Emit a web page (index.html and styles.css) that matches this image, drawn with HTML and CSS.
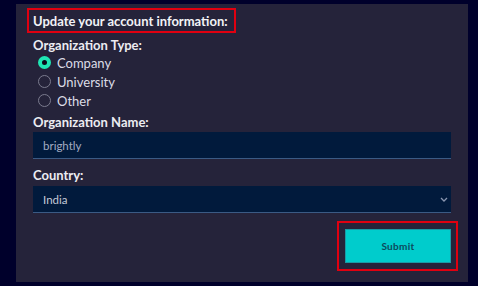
FILE: index.html
```html
<!DOCTYPE html>
<html>
<head>
<meta charset="utf-8">
<link rel="stylesheet" href="styles.css">
</head>
<body>
<div class="panel">
  <div class="heading-box"><h1 class="heading">Update your account information:</h1></div>
  <div class="label">Organization Type:</div>
  <div class="radios">
    <label class="radio"><span class="dot checked"></span>Company</label>
    <label class="radio"><span class="dot"></span>University</label>
    <label class="radio"><span class="dot"></span>Other</label>
  </div>
  <div class="label name-label">Organization Name:</div>
  <div class="field">brightly</div>
  <div class="label country-label">Country:</div>
  <div class="field select">India
    <svg class="chev" width="8" height="5" viewBox="0 0 8 5"><path d="M1 1l3 3 3-3" fill="none" stroke="#8a96b0" stroke-width="1.3"/></svg>
  </div>
  <div class="actions">
    <div class="btn-box"><button class="submit">Submit</button></div>
  </div>
</div>
</body>
</html>
```
FILE: styles.css
```css
html, body { margin: 0; padding: 0; }
body {
  background: #00002b;
  width: 478px;
  height: 286px;
  overflow: hidden;
  font-family: Lato, "Noto Sans", sans-serif;
  color: #e6e6ee;
}
.panel {
  margin: 4px 0 0 16px;
  width: 452px;
  height: 278px;
  box-sizing: border-box;
  background: #25233a;
  padding: 4px 17px 0 11px;
  display: flex;
  flex-direction: column;
}
.heading-box {
  align-self: flex-start;
  border: 2px solid #e00010;
  padding: 0 6px 0 4px;
  height: 25px;
  box-sizing: border-box;
  display: flex;
  align-items: center;
}
.heading {
  margin: 0;
  font-size: 13px;
  font-weight: 700;
  color: #f2f2f6;
  letter-spacing: 0;
}
.label {
  font-size: 13px;
  font-weight: 700;
  padding-left: 6px;
  margin-top: 4px;
  height: 17px;
  line-height: 17px;
  color: #ececf2;
}
.radios {
  display: flex;
  flex-direction: column;
  padding-left: 6px;
  margin-top: -1px;
}
.radio {
  display: flex;
  align-items: center;
  gap: 6px;
  height: 19px;
  font-size: 13px;
  color: #dcdce6;
  padding-left: 5px;
}
.dot {
  width: 13px;
  height: 13px;
  border-radius: 50%;
  border: 1.3px solid #7b7b8e;
  box-sizing: border-box;
}
.dot.checked {
  border: 4px solid #1fe6b4;
  background: #0a0a1a;
}
.name-label { margin-top: 4px; }
.field {
  margin-left: 6px;
  margin-top: 1px;
  height: 27px;
  box-sizing: border-box;
  background: #011a3c;
  border-bottom: 1.5px solid #3b5a84;
  font-size: 11.5px;
  color: #a4acc2;
  padding-left: 10px;
  display: flex;
  align-items: center;
}
.country-label { margin-top: 8px; }
.select {
  position: relative;
  color: #c6cad8;
  margin-top: 2px;
}
.chev {
  position: absolute;
  right: 3px;
  top: 11px;
}
.actions {
  display: flex;
  justify-content: flex-end;
  margin-top: 8px;
  margin-right: -7px;
}
.btn-box {
  border: 2px solid #e00010;
  padding: 6px 5px 6px 6px;
}
.submit {
  display: block;
  width: 106px;
  height: 34px;
  background: #00cccc;
  border: 1px solid #1a9aa6;
  font-family: Lato, sans-serif;
  font-size: 10px;
  font-weight: 700;
  color: #0d4a5c;
  letter-spacing: 0.3px;
}
```
